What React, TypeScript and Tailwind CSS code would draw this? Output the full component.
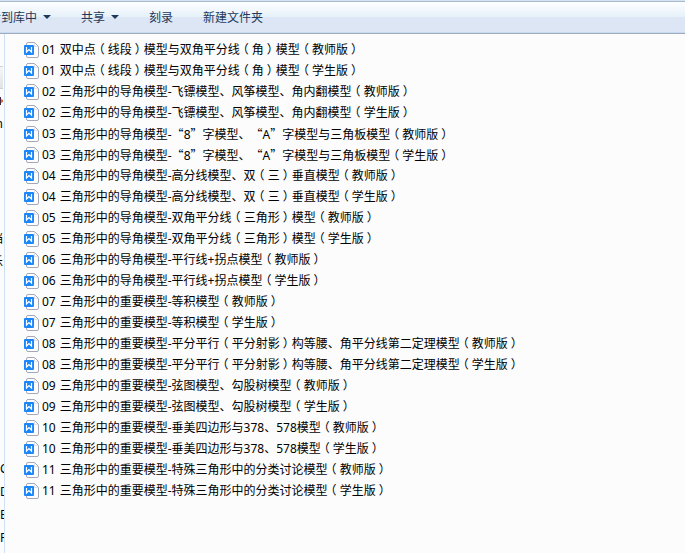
const files = [
  ['01', '双中点（线段）模型与双角平分线（角）模型'],
  ['02', '三角形中的导角模型-飞镖模型、风筝模型、角内翻模型'],
  ['03', '三角形中的导角模型-“8”字模型、“A”字模型与三角板模型'],
  ['04', '三角形中的导角模型-高分线模型、双（三）垂直模型'],
  ['05', '三角形中的导角模型-双角平分线（三角形）模型'],
  ['06', '三角形中的导角模型-平行线+拐点模型'],
  ['07', '三角形中的重要模型-等积模型'],
  ['08', '三角形中的重要模型-平分平行（平分射影）构等腰、角平分线第二定理模型'],
  ['09', '三角形中的重要模型-弦图模型、勾股树模型'],
  ['10', '三角形中的重要模型-垂美四边形与378、578模型'],
  ['11', '三角形中的重要模型-特殊三角形中的分类讨论模型'],
].flatMap(([no, title]) => ['教师版', '学生版'].map((edition) => ({ no, name: `${title}（${edition}）` })));

// Rows of the navigation pane; only its right-hand edge is in view.
const places = [
  { row: 2, text: 'n', end: true },
  { row: 7, text: '档', end: true },
  { row: 8, text: '乐', end: true },
  { row: 17, text: 'C', end: false },
  { row: 18, text: 'D', end: false },
  { row: 19, text: 'E', end: false },
  { row: 20, text: 'F', end: false },
];

function DocIcon() {
  return (
    <svg className="size-4 shrink-0" viewBox="0 0 16 16" aria-hidden="true">
      <path d="M2.5 3V2Q2.5 .5 4 .5H10.5L14.5 4.5V14Q14.5 15.5 13 15.5H4Q2.5 15.5 2.5 14Z" fill="#fff" stroke="#a3a9b8" />
      <path d="M10.5 1V4.5H14" fill="none" stroke="#dfe2e8" />
      <rect x="0" y="3" width="10" height="10" rx="1" fill="#1a86f8" />
      <path d="M2.5 5V10L5 7.5L7.5 10V5" fill="none" stroke="#fff" strokeWidth="1.2" />
    </svg>
  );
}

// Brackets are centred in their full-width cell; quotes keep the full-width form.
function FileName({ text }: { text: string }) {
  return (
    <span>
      {text.split(/([“”（）])/).map((part, i) => {
        if (part === '“' || part === '”') {
          return <span key={i} className="font-['Noto_Sans_CJK_SC',sans-serif]">{part}</span>;
        }
        if (part === '（' || part === '）') {
          return <span key={i} className="px-[3px] [font-feature-settings:'halt']">{part}</span>;
        }
        return part;
      })}
    </span>
  );
}

function ToolButton({ label, menu = false }: { label: string; menu?: boolean }) {
  return (
    <button type="button" className="flex shrink-0 items-center gap-1.5 whitespace-nowrap text-[#1e395b]">
      {label}
      {menu && (
        <svg className="h-1 w-2" viewBox="0 0 8 4" aria-hidden="true">
          <path d="M0 0H8L4 4Z" fill="#1e395b" />
        </svg>
      )}
    </button>
  );
}

export default function App() {
  return (
    <div className="flex min-h-screen flex-col bg-[#fcfcfc] font-['Noto_Sans','Noto_Sans_CJK_SC',sans-serif] text-[12px] leading-[21px] text-black [text-spacing-trim:space-all]">
      <header className="overflow-hidden border-t border-[#d5e3f2]">
        <div className="border-t border-b border-t-[#a9b9ce] border-b-[#a0a9be]">
          <div className="flex h-[31px] items-center border-b border-[#c8dcf0] bg-linear-to-b from-[#fdfeff] from-0% via-[#e6f1fa] via-50% to-[#dce6f4] to-50%">
            <div className="-ml-[23px] flex gap-[30px]">
              <ToolButton label="包含到库中" menu />
              <ToolButton label="共享" menu />
              <ToolButton label="刻录" />
              <ToolButton label="新建文件夹" />
            </div>
          </div>
        </div>
      </header>
      <div className="flex flex-1">
        <nav className="w-[5px] shrink-0 overflow-hidden border-r border-[#cfe2f5] pt-8">
          <ul>
            {Array.from({ length: 21 }, (_, row) => {
              const place = places.find((p) => p.row === row);
              return (
                <li
                  key={row}
                  className={`flex h-[23px] items-center overflow-hidden ${place?.end ? 'justify-end pr-px' : ''} ${
                    row === 0 ? 'mr-px border-y border-[#d0d0d0] bg-linear-to-b from-[#f6f6f6] to-[#e3e3e3]' : ''
                  }`}
                >
                  {row === 1 && (
                    <svg className="h-2 w-[3px]" viewBox="0 0 3 8" aria-hidden="true">
                      <path d="M0 0H1V8H0Z" fill="#4a2348" />
                      <path d="M1 2L3 3V5L1 6Z" fill="#d9702c" />
                    </svg>
                  )}
                  {place?.text}
                </li>
              );
            })}
          </ul>
        </nav>
        <main className="min-w-0 flex-1 pt-[5px] pl-[19px]">
          <ul>
            {files.map((file) => (
              <li key={file.no + file.name}>
                <a href="#" className="flex h-[21px] items-center whitespace-nowrap">
                  <DocIcon />
                  <span className="ml-0.5 flex h-full gap-1">
                    <span>{file.no}</span>
                    <FileName text={file.name} />
                  </span>
                </a>
              </li>
            ))}
          </ul>
        </main>
      </div>
    </div>
  );
}
